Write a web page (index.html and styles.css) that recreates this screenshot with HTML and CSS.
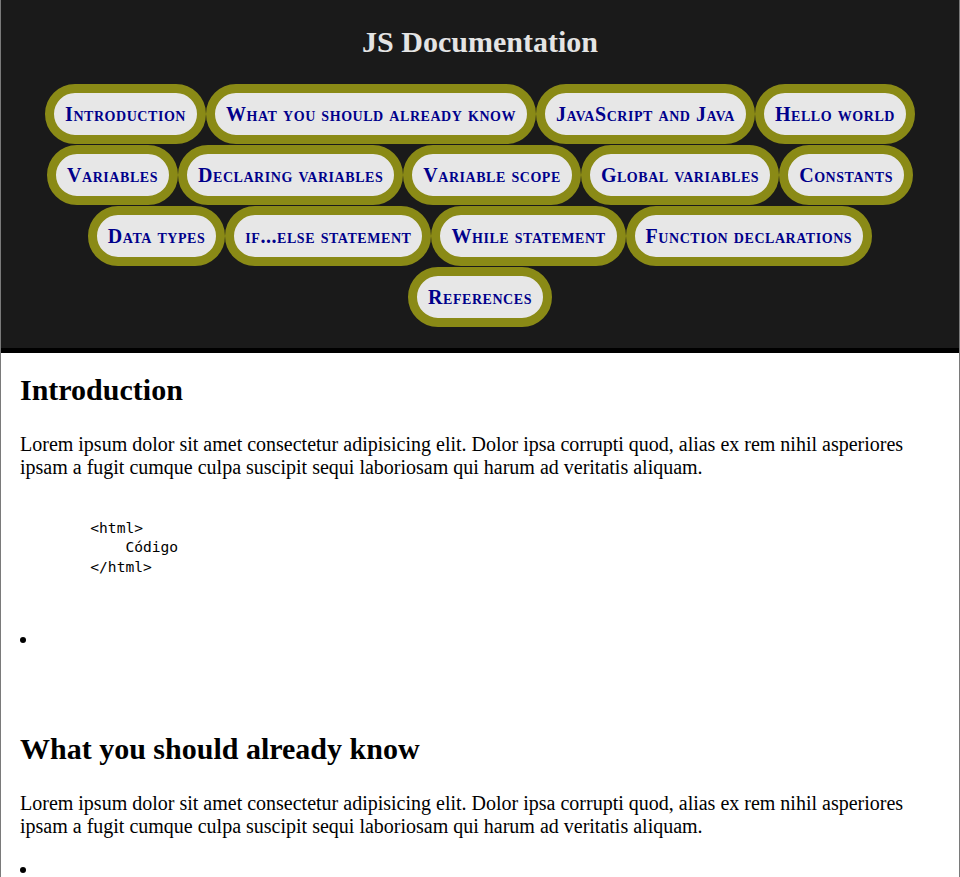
FILE: index.html
```html
<!DOCTYPE html>
<html lang="en">
<head>
<meta charset="utf-8">
<title>JS Documentation</title>
<link rel="stylesheet" href="styles.css">
</head>
<body>
<header class="site-header">
  <h1 class="site-title">JS Documentation</h1>
  <nav class="nav">
    <a class="nav-link" href="#introduction">Introduction</a>
    <a class="nav-link" href="#what">What you should already know</a>
    <a class="nav-link" href="#java">JavaScript and Java</a>
    <a class="nav-link" href="#hello">Hello world</a>
    <a class="nav-link" href="#variables">Variables</a>
    <a class="nav-link" href="#declaring">Declaring variables</a>
    <a class="nav-link" href="#scope">Variable scope</a>
    <a class="nav-link" href="#global">Global variables</a>
    <a class="nav-link" href="#constants">Constants</a>
    <a class="nav-link" href="#types">Data types</a>
    <a class="nav-link" href="#ifelse">if...else statement</a>
    <a class="nav-link" href="#while">While statement</a>
    <a class="nav-link" href="#functions">Function declarations</a>
    <a class="nav-link" href="#references">References</a>
  </nav>
</header>
<main class="main">
  <section class="doc-section" id="introduction">
    <h2 class="section-title">Introduction</h2>
    <p class="text">Lorem ipsum dolor sit amet consectetur adipisicing elit. Dolor ipsa corrupti quod, alias ex rem nihil asperiores ipsam a fugit cumque culpa suscipit sequi laboriosam qui harum ad veritatis aliquam.</p>
    <pre class="code">        &lt;html&gt;
            Código
        &lt;/html&gt;</pre>
    <ul class="list list-after-code"><li></li></ul>
  </section>
  <section class="doc-section" id="what">
    <h2 class="section-title">What you should already know</h2>
    <p class="text">Lorem ipsum dolor sit amet consectetur adipisicing elit. Dolor ipsa corrupti quod, alias ex rem nihil asperiores ipsam a fugit cumque culpa suscipit sequi laboriosam qui harum ad veritatis aliquam.</p>
    <ul class="list"><li></li></ul>
  </section>
</main>
</body>
</html>
```
FILE: styles.css
```css
html, body {
  margin: 0;
  padding: 0;
}
body {
  border-left: 1px solid #7a7a7a;
  border-right: 1px solid #7a7a7a;
  font-family: "Liberation Serif", "Times New Roman", serif;
  font-size: 20px;
  color: #000;
  background: #fff;
  min-height: 877px;
}
.site-header {
  background: #1a1a1a;
  border-bottom: 5px solid #000;
  padding: 25px 0 21px;
}
.site-title {
  margin: 0 0 24.5px;
  text-align: center;
  font-size: 30px;
  font-weight: bold;
  line-height: 34.5px;
  color: #e4e4e4;
}
.nav {
  max-width: 890px;
  margin: 0 auto;
  display: flex;
  flex-wrap: wrap;
  justify-content: center;
  gap: 1px 0;
}
.nav-link {
  display: block;
  background: #e7e7e7;
  border: 9px solid #8a8a16;
  border-radius: 30px;
  padding: 0 11px;
  line-height: 42px;
  height: 42px;
  font-size: 20px;
  font-weight: bold;
  font-variant: small-caps;
  letter-spacing: 0.55px;
  color: #00008b;
  text-decoration: none;
  white-space: nowrap;
}
.main {
  padding: 0 19px;
}
.doc-section {
  display: flow-root;
}
.doc-section + .doc-section {
  margin-top: 41px;
}
.section-title {
  margin: 20px 0 25px;
  font-size: 30px;
  line-height: 34.5px;
  font-weight: bold;
}
.text {
  margin: 20px 0;
  line-height: 23px;
}
.code {
  margin: 39px 0 0;
  font-family: "DejaVu Sans Mono", monospace;
  font-size: 14.6px;
  line-height: 19.5px;
}
.list {
  margin: 20px 0;
  padding: 0;
  list-style: disc inside;
  line-height: 23px;
}
.list li {
  height: 23px;
}
.list-after-code {
  margin-top: 52px;
}
```
